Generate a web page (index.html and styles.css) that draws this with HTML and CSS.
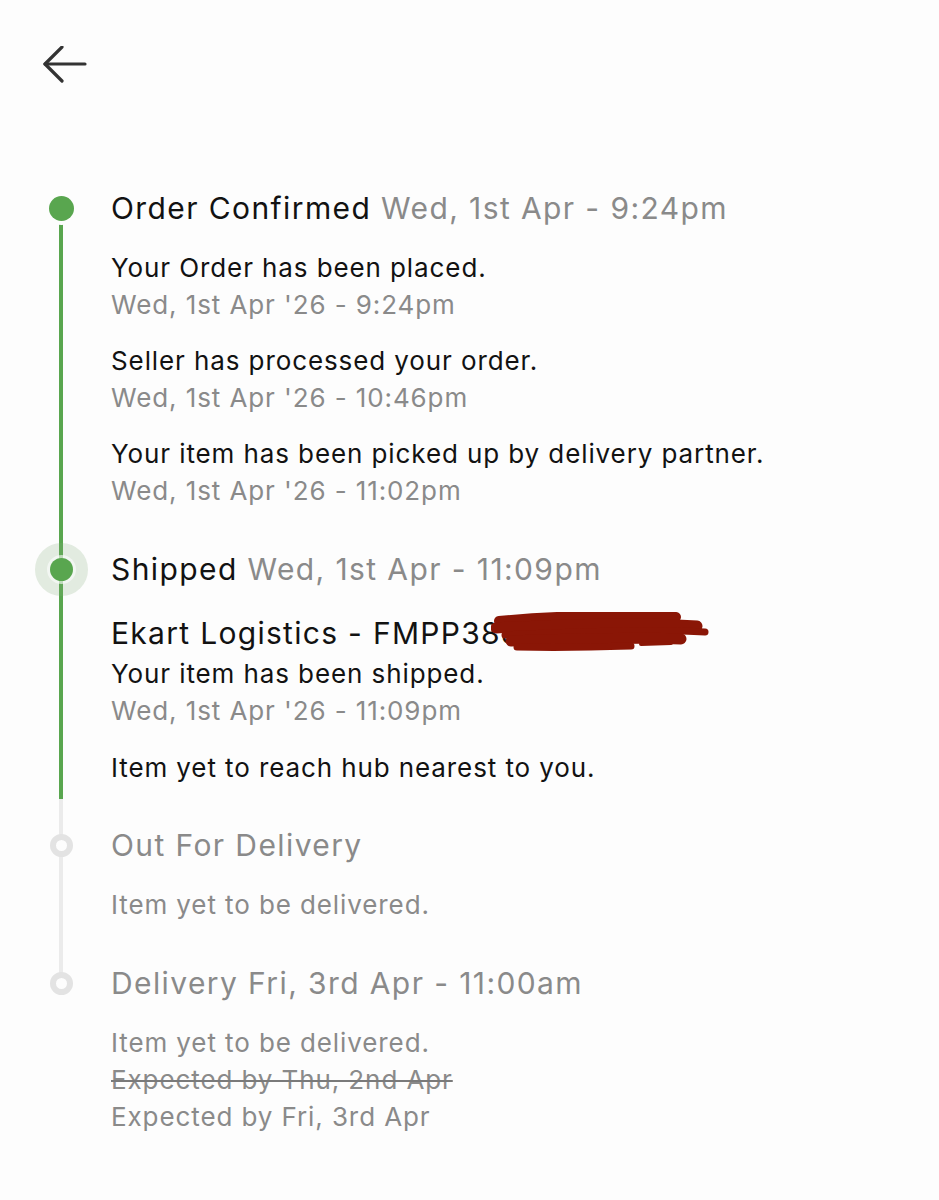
FILE: index.html
```html
<!DOCTYPE html>
<html lang="en">
<head>
<meta charset="utf-8">
<title>Order tracking</title>
<link rel="stylesheet" href="styles.css">
</head>
<body>
<div class="page">
  <header class="header">
    <button class="back" aria-label="Back">
      <svg width="46" height="40" viewBox="0 0 46 40" fill="none" stroke="#333" stroke-width="3.2" stroke-linecap="round" stroke-linejoin="round">
        <path d="M3 18 H43"/>
        <path d="M20 1 L3 18 L20 35"/>
      </svg>
    </button>
  </header>

  <ol class="timeline">
    <li class="step step-done step-first">
      <div class="rail">
        <div class="seg seg-top"></div>
        <div class="dotbox"><span class="dot dot-solid"></span></div>
        <div class="seg seg-bottom"></div>
      </div>
      <div class="content">
        <div class="title"><span class="title-main">Order Confirmed</span> <span class="title-date">Wed, 1st Apr - 9:24pm</span></div>
        <div class="items">
          <div class="item"><div class="msg">Your Order has been placed.</div><div class="when">Wed, 1st Apr '26 - 9:24pm</div></div>
          <div class="item"><div class="msg">Seller has processed your order.</div><div class="when">Wed, 1st Apr '26 - 10:46pm</div></div>
          <div class="item"><div class="msg">Your item has been picked up by delivery partner.</div><div class="when">Wed, 1st Apr '26 - 11:02pm</div></div>
        </div>
      </div>
    </li>

    <li class="step step-done step-current">
      <div class="rail">
        <div class="seg seg-top"></div>
        <div class="dotbox"><span class="dot dot-current"></span></div>
        <div class="seg seg-bottom"></div>
      </div>
      <div class="content">
        <div class="title"><span class="title-main">Shipped</span> <span class="title-date">Wed, 1st Apr - 11:09pm</span></div>
        <div class="courier">Ekart Logistics - FMPP388<span class="redact"><svg class="scribble" width="218" height="40" viewBox="0 0 218 40" fill="none" stroke="#8a1606" stroke-linecap="round">
          <path d="M8 9 C60 4 130 2 185 5" stroke-width="10"/>
          <path d="M5 16 C80 12 150 10 206 14" stroke-width="11"/>
          <path d="M14 23 C80 20 160 17 214 20" stroke-width="7"/>
          <path d="M20 29 C80 27 150 25 190 27" stroke-width="11"/>
          <path d="M26 35 C70 36 110 35 140 34" stroke-width="7"/>
          <path d="M150 32 L180 31" stroke-width="4"/>
        </svg></span></div>
        <div class="items items-tight">
          <div class="item"><div class="msg">Your item has been shipped.</div><div class="when">Wed, 1st Apr '26 - 11:09pm</div></div>
          <div class="item"><div class="msg">Item yet to reach hub nearest to you.</div></div>
        </div>
      </div>
    </li>

    <li class="step step-pending">
      <div class="rail">
        <div class="seg seg-top"></div>
        <div class="dotbox"><span class="dot dot-hollow"></span></div>
        <div class="seg seg-bottom"></div>
      </div>
      <div class="content">
        <div class="title"><span class="title-date">Out For Delivery</span></div>
        <div class="items">
          <div class="item"><div class="when">Item yet to be delivered.</div></div>
        </div>
      </div>
    </li>

    <li class="step step-pending step-last">
      <div class="rail">
        <div class="seg seg-top"></div>
        <div class="dotbox"><span class="dot dot-hollow"></span></div>
        <div class="seg seg-bottom"></div>
      </div>
      <div class="content">
        <div class="title"><span class="title-date">Delivery Fri, 3rd Apr - 11:00am</span></div>
        <div class="items">
          <div class="item">
            <div class="when">Item yet to be delivered.</div>
            <div class="when struck">Expected by Thu, 2nd Apr</div>
            <div class="when">Expected by Fri, 3rd Apr</div>
          </div>
        </div>
      </div>
    </li>
  </ol>
</div>
</body>
</html>
```

FILE: styles.css
```css
* { box-sizing: border-box; }

html, body {
  margin: 0;
  padding: 0;
  background: #fdfdfd;
}

body {
  font-family: Inter, "Noto Sans", "Liberation Sans", sans-serif;
  color: #121212;
}

.page {
  width: 939px;
  min-height: 1200px;
}

.header {
  height: 188px;
  padding: 46px 0 0 42px;
}

.back {
  display: block;
  border: 0;
  background: transparent;
  padding: 0;
  margin: 0;
  cursor: pointer;
}

.back svg { display: block; }

.timeline {
  list-style: none;
  margin: 0;
  padding: 0;
}

.step {
  display: flex;
  align-items: stretch;
}

.rail {
  flex: 0 0 auto;
  width: 40px;
  margin-left: 41px;
  margin-right: 30px;
  display: flex;
  flex-direction: column;
  align-items: center;
}

.seg {
  width: 4px;
}

.seg-bottom { flex: 1 1 auto; }

.dotbox {
  position: relative;
  height: 40px;
  width: 40px;
  display: flex;
  align-items: center;
  justify-content: center;
}

.dotbox::before {
  content: "";
  position: absolute;
  left: 18px;
  top: 0;
  bottom: 0;
  width: 4px;
}

.dot {
  position: relative;
  z-index: 1;
  display: block;
  border-radius: 50%;
}

.dot-solid {
  width: 25px;
  height: 25px;
  background: #59a64f;
  box-shadow: 0 0 0 4px #fdfdfd;
}

.dot-current {
  width: 23px;
  height: 23px;
  background: #59a64f;
  box-shadow: 0 0 0 3px rgba(253,253,253,0.6), 0 0 0 15px rgba(130, 175, 125, 0.22);
}

.dot-hollow {
  width: 23px;
  height: 23px;
  background: #fdfdfd;
  border: 6px solid #e3e3e3;
}

/* line colours */
.step-done .seg,
.step-done .dotbox::before { background: #59a64f; }

.step-pending .seg,
.step-pending .dotbox::before { background: #ebebeb; }

.step-first .dotbox::before { top: 50%; }
.step-last .dotbox::before { bottom: 50%; }
.step-last .seg-bottom { background: transparent; }

/* vertical rhythm */
.step-first .content { padding-bottom: 40px; }
.step-current .content { padding-bottom: 13px; }
.step-pending .seg-top { height: 26px; }
.step-pending .content { padding-top: 26px; padding-bottom: 14px; }
.step-last .content { padding-bottom: 40px; }

.content {
  flex: 1 1 auto;
  min-width: 0;
}

.title {
  height: 40px;
  line-height: 40px;
  font-size: 30px;
  letter-spacing: 1.4px;
  white-space: nowrap;
}

.title-main { color: #121212; }
.title-date { color: #8a8a8a; }

.items {
  display: flex;
  flex-direction: column;
  gap: 19px;
  margin-top: 21px;
}

.items-tight { margin-top: 0; gap: 20px; }

.msg, .when {
  font-size: 26px;
  line-height: 37px;
  letter-spacing: 0.9px;
  white-space: nowrap;
}

.msg { color: #121212; }
.when { color: #8a8a8a; }

.struck {
  text-decoration: line-through;
  text-decoration-thickness: 2px;
  text-decoration-color: #7a7a7a;
}

.courier {
  margin-top: 22px;
  font-size: 30px;
  line-height: 44px;
  letter-spacing: 1.3px;
  color: #121212;
  white-space: nowrap;
}

.redact {
  position: relative;
  display: inline-block;
  width: 0;
  height: 0;
}

.scribble {
  position: absolute;
  left: -30px;
  top: -32px;
  display: block;
}
```
